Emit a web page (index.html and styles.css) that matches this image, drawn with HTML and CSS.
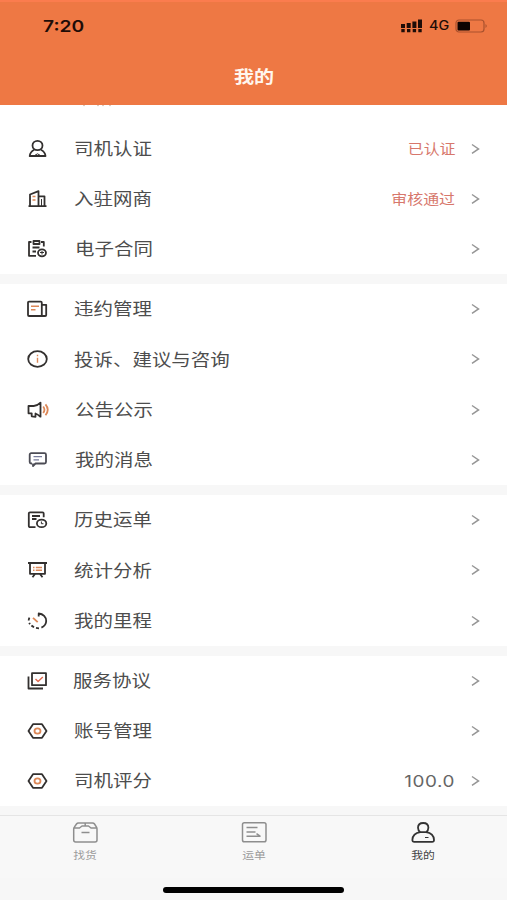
FILE: index.html
```html
<!DOCTYPE html>
<html lang="zh-CN">
<head>
<meta charset="utf-8">
<title>我的</title>
<link rel="stylesheet" href="styles.css">
</head>
<body>
<div class="app">
  <header class="header">
    <div class="status">
      <span class="time">7:20</span>
      <span class="net">
        <svg class="signal" width="22" height="14" viewBox="0 0 22 14"><path d="M0 5h4v4H0zM5.7 4h4v5h-4zM11.4 2.5h4V9h-4zM17 .5h4V9h-4zM.3 10h3.4v3.2H.3zM6 10h3.4v3.2H6zM11.7 10h3.4v3.2h-3.4zM17.3 10h3.4v3.2h-3.4z"/></svg>
        <span class="carrier">4G</span>
        <svg class="battery" width="34" height="14" viewBox="0 0 34 14"><rect x="1" y="1" width="28" height="12" rx="3" fill="none" stroke="#a9512d" stroke-width="1.2"/><rect x="2.500" y="2.700" width="12.500" height="8.700" rx="1"/><path d="M30.5 5q2.500 2 0 4z" fill="#a9512d"/></svg>
      </span>
    </div>
    <h1 class="title"><span>我的</span></h1>
  </header>
  <main class="list">
    <svg class="peek" width="32" height="3" viewBox="0 0 32 3"><path d="M1 .6h2M15 .6h2M20 .6h2M27 .6h2"/></svg>
    <section class="group">
      <div class="row"><svg class="icon" viewBox="0 0 24 20"><ellipse cx="11.500" cy="6.500" rx="5" ry="4.700"/><path d="M8.300 10.800C6 12 4 14.200 3.700 17h15.800c-.3-2.800-2.300-5-4.600-6.200"/><path class="fine" d="M8 16.800l3.500-2 3.500 2"/></svg><span class="label">司机认证</span><span class="value">已认证</span><svg class="arrow" viewBox="0 0 9 12"><path d="M1 1.500l6.500 4.400L1 10.300"/></svg></div>
      <div class="row"><svg class="icon" viewBox="0 0 24 20"><path d="M2.500 17.200h18M4 17V5.500l8.500-3.300V17M12.500 7.300h6V17"/><path class="fine" d="M15.500 10v7"/><path class="accent" d="M6.500 7.500h3M6.500 11h3"/></svg><span class="label">入驻网商</span><span class="value">审核通过</span><svg class="arrow" viewBox="0 0 9 12"><path d="M1 1.500l6.500 4.400L1 10.300"/></svg></div>
      <div class="row"><svg class="icon" viewBox="0 0 24 20"><path d="M5.500 3H3v13.800h7M15 3h2.800v4.500M7.500 2h6v3h-6zM6.500 8.500h7M6.500 12.500h3.500"/><ellipse cx="16" cy="13.800" rx="4" ry="3.500"/><path class="fine" d="M14 13.500h4M16 12v3.500"/></svg><span class="label nudge">电子合同</span><svg class="arrow" viewBox="0 0 9 12"><path d="M1 1.500l6.500 4.400L1 10.300"/></svg></div>
    </section>
    <section class="group">
      <div class="row"><svg class="icon" viewBox="0 0 24 20"><path d="M15.800 17H3a1 1 0 0 1-1-1V3.700a1 1 0 0 1 1-1h11.800a1 1 0 0 1 1 1V17h3.400a1 1 0 0 0 1-1V5.800h-4"/><path class="accent" d="M5 7.200h8M5 10.700h4.500"/></svg><span class="label">违约管理</span><svg class="arrow" viewBox="0 0 9 12"><path d="M1 1.500l6.500 4.400L1 10.300"/></svg></div>
      <div class="row"><svg class="icon" viewBox="0 0 24 20"><ellipse cx="11.500" cy="10" rx="9.300" ry="7.800"/><path class="accent" d="M11.500 5.800v1.500M11.500 8.800v5"/></svg><span class="label">投诉、建议与咨询</span><svg class="arrow" viewBox="0 0 9 12"><path d="M1 1.500l6.500 4.400L1 10.300"/></svg></div>
      <div class="row"><svg class="icon" viewBox="0 0 24 20"><path d="M2.500 6h5.200c3 0 5-1.500 6.800-3.300v14c-1.800-1.500-3.300-2.700-5-3.200v3.300l-3.800-.5v-3H2.500z"/><path class="accent thick" d="M17.200 6.500q2.500 3.200 0 6.500M19.500 4.300q4.500 5.400 0 10.900"/></svg><span class="label nudge">公告公示</span><svg class="arrow" viewBox="0 0 9 12"><path d="M1 1.500l6.500 4.400L1 10.300"/></svg></div>
      <div class="row"><svg class="icon slate" viewBox="0 0 24 20"><path d="M6 13.500h-.8A1.500 1.500 0 0 1 3.700 12V4.700a1.500 1.500 0 0 1 1.500-1.500h13.300A1.500 1.500 0 0 1 20 4.700V12a1.500 1.500 0 0 1-1.500 1.500h-9L7 16v-2.500"/><path class="blue" d="M7.500 6.700H16M7.500 9.800H13"/></svg><span class="label nudge">我的消息</span><svg class="arrow" viewBox="0 0 9 12"><path d="M1 1.500l6.500 4.400L1 10.300"/></svg></div>
    </section>
    <section class="group">
      <div class="row"><svg class="icon" viewBox="0 0 24 20"><path d="M9.500 17.200H4A1.200 1.200 0 0 1 2.800 16V3.500A1.200 1.200 0 0 1 4 2.300h12.500a1.200 1.200 0 0 1 1.200 1.200v3.700M6 6h8M6 9h4.500"/><ellipse cx="15.600" cy="13.400" rx="4.700" ry="3.800"/><path class="fine" d="M15.400 11.500v2.200h2"/></svg><span class="label">历史运单</span><svg class="arrow" viewBox="0 0 9 12"><path d="M1 1.500l6.500 4.400L1 10.300"/></svg></div>
      <div class="row"><svg class="icon" viewBox="0 0 24 20"><path d="M2 3h19M4 3v10.800h15V3M9 14l-2.500 3.300M14 14l2.500 3.300"/><path class="accent" d="M7 7.500h1.500M9.800 7.500H16M7 10.300h1.500M9.800 10.300H16"/></svg><span class="label">统计分析</span><svg class="arrow" viewBox="0 0 9 12"><path d="M1 1.500l6.500 4.400L1 10.300"/></svg></div>
      <div class="row"><svg class="icon" viewBox="0 0 24 20"><path d="M12.700 5.500v-3c4.500.3 7.500 3.700 7.500 7.500 0 3-1.900 5.300-4.800 6.600"/><path d="M13 17.300a11 9 0 0 1-9.800-5.500M2.700 9.500q0-1.800 1-3.300" stroke-dasharray="3 2"/><path class="accent thick" d="M7 6.800l4.700 4.300"/></svg><span class="label">我的里程</span><svg class="arrow" viewBox="0 0 9 12"><path d="M1 1.500l6.500 4.400L1 10.300"/></svg></div>
    </section>
    <section class="group">
      <div class="row"><svg class="icon" viewBox="0 0 24 20"><path d="M6 2.200h14v12H6zM2.500 5.500v12H17"/><path class="accent red" d="M9.500 8l2.600 2.500L16.800 6"/></svg><span class="label tuck">服务协议</span><svg class="arrow" viewBox="0 0 9 12"><path d="M1 1.500l6.500 4.400L1 10.300"/></svg></div>
      <div class="row"><svg class="icon" viewBox="0 0 24 20"><path d="M7 3.200h9l4.500 6.800-4.500 6.800H7L2.500 10z"/><ellipse class="accent thick" cx="11.500" cy="10" rx="3" ry="2.600"/></svg><span class="label">账号管理</span><svg class="arrow" viewBox="0 0 9 12"><path d="M1 1.500l6.500 4.400L1 10.300"/></svg></div>
      <div class="row"><svg class="icon" viewBox="0 0 24 20"><path d="M7 3.200h9l4.500 6.800-4.500 6.800H7L2.500 10z"/><ellipse class="accent thick" cx="11.500" cy="10" rx="3" ry="2.600"/></svg><span class="label">司机评分</span><span class="value score">100.0</span><svg class="arrow" viewBox="0 0 9 12"><path d="M1 1.500l6.500 4.400L1 10.300"/></svg></div>
    </section>
  </main>
  <nav class="tabs">
    <div class="tab"><svg width="26" height="22" viewBox="0 0 26 22"><path d="M1.700 8q0-1 .6-1.800L4.500 3Q5.200 2 6.500 2h14q1.300 0 2 1l2 3.200q.5.800.5 1.800v11a2 2 0 0 1-2 2H3.700a2 2 0 0 1-2-2zM2 7h5.500L10 5h6.500L19 7h5.500M13.200 2v3M9.500 11.500h8"/></svg><span>找货</span></div>
    <div class="tab"><svg width="26" height="22" viewBox="0 0 26 22"><rect x="1.500" y="1.700" width="23.500" height="19" rx="1.800"/><path d="M5.500 6.500h11M5.500 11h9M5.500 15.200H19l-3.500-2.500"/></svg><span>运单</span></div>
    <div class="tab active"><svg width="26" height="22" viewBox="0 0 26 22"><path d="M10.300 11.200C8.700 10 8 8.600 8 6.800 8 3.800 10 2 13.200 2s5.200 1.800 5.200 4.800c0 1.800-.7 3.200-2.300 4.400 4.800.8 7.700 3.600 7.900 7.600.1 1.400-.6 2-1.900 2H4.300c-1.300 0-2-.6-1.900-2 .2-4 3.100-6.800 7.900-7.600zM10.300 11.200h5.800"/><path class="fine" d="M15 16.500h3.500"/></svg><span>我的</span></div>
  </nav>
  <div class="home"></div>
</div>
</body>
</html>
```

FILE: styles.css
```css
* { box-sizing: border-box; }
body {
  margin: 0;
  font-family: "Noto Sans CJK SC", "Noto Sans", sans-serif;
  background: #fff;
}
.app {
  width: 507px;
  height: 900px;
  display: flex;
  flex-direction: column;
  overflow: hidden;
  background: #f7f7f7;
}
.header {
  height: 105px;
  flex: none;
  background: #ee7844;
  border-top: 2px solid #fb7c4e;
}
.status {
  height: 48px;
  padding: 0 18px 0 43px;
  display: flex;
  align-items: center;
  justify-content: space-between;
}
.time {
  font: 600 16px/20px Inter, sans-serif;
  color: #1e0d08;
  transform: scaleX(1.2);
  transform-origin: left;
}
.net { display: flex; align-items: center; color: #1e0d08; }
.signal { fill: #1e0d08; margin-right: 6px; }
.carrier {
  width: 20px;
  margin-right: 6px;
  font: 500 12.5px/16px Inter, sans-serif;
  transform: scaleX(1.15);
  transform-origin: left;
}
.battery { fill: #0c0301; }
.title {
  margin: 0;
  height: 55px;
  text-align: center;
  font-size: 17px;
  line-height: 52px;
  font-weight: 700;
  color: #fff6ee;
}
.title span { display: inline-block; transform: scaleX(1.18); }
.list {
  flex: none;
  height: 710px;
  display: flex;
  flex-direction: column;
  gap: 9.9px;
}
.peek {
  flex: none;
  display: block;
  margin: 0 0 -12.9px 82px;
  position: relative;
  fill: none;
  stroke: #d9c6ba;
  stroke-width: 1;
}
.group { background: #fff; flex: none; }
.group:nth-of-type(1) { padding-top: 18.4px; }
.row {
  height: 50.25px;
  padding: 0 27px 0 26px;
  display: flex;
  align-items: center;
}
.icon {
  width: 24px;
  height: 20px;
  flex: none;
  fill: none;
  stroke: #33302f;
  stroke-width: 1.8;
  stroke-linejoin: round;
}
.icon .accent { stroke: #dc8858; stroke-width: 1.4; }
.icon .thick { stroke-width: 1.8; }
.icon .red { stroke: #e0694f; }
.fine { stroke-width: 1; }
.icon.slate { stroke: #4c4c55; }
.slate .blue { stroke: #777b9b; stroke-width: 1.3; }
.label {
  margin: 0 0 1.5px 24px;
  font-size: 16.5px;
  line-height: 24px;
  color: #4d4d4d;
  white-space: nowrap;
  transform: scaleX(1.18);
  transform-origin: left;
}
.nudge { margin-left: 25px; }
.tuck { margin-left: 23px; }
.value {
  margin: 0 0 1.5px auto;
  font-size: 13.5px;
  line-height: 20px;
  color: #d7776c;
  transform: translateX(-1px) scaleX(1.18);
  transform-origin: right;
}
.value.score {
  margin-bottom: 0;
  font: 400 16px/20px Inter, sans-serif;
  letter-spacing: .5px;
  color: #666;
}
.arrow {
  width: 9px;
  height: 12px;
  flex: none;
  margin-left: auto;
  fill: none;
  stroke: #969696;
  stroke-width: 1.5;
}
.value + .arrow { margin-left: 15px; }
.tabs {
  flex: none;
  height: 63px;
  border-top: 1.5px solid #e5e5e5;
  display: grid;
  grid-template-columns: repeat(3, 1fr);
  background: #f8f8f8;
}
.tab {
  display: flex;
  flex-direction: column;
  align-items: center;
  padding-top: 5px;
  color: #9b9b9b;
}
.tab svg {
  flex: none;
  fill: none;
  stroke: #8e8e8e;
  stroke-width: 1.5;
  stroke-linejoin: round;
}
.tab span {
  margin-top: 4px;
  font-size: 10px;
  line-height: 16px;
  transform: scaleX(1.18);
}
.tab.active { color: #444; }
.tab.active svg { stroke: #333; stroke-width: 1.8; }
.home {
  flex: none;
  width: 181px;
  height: 5.5px;
  margin: 9px auto 0;
  border-radius: 3px;
  background: #000;
}
```
